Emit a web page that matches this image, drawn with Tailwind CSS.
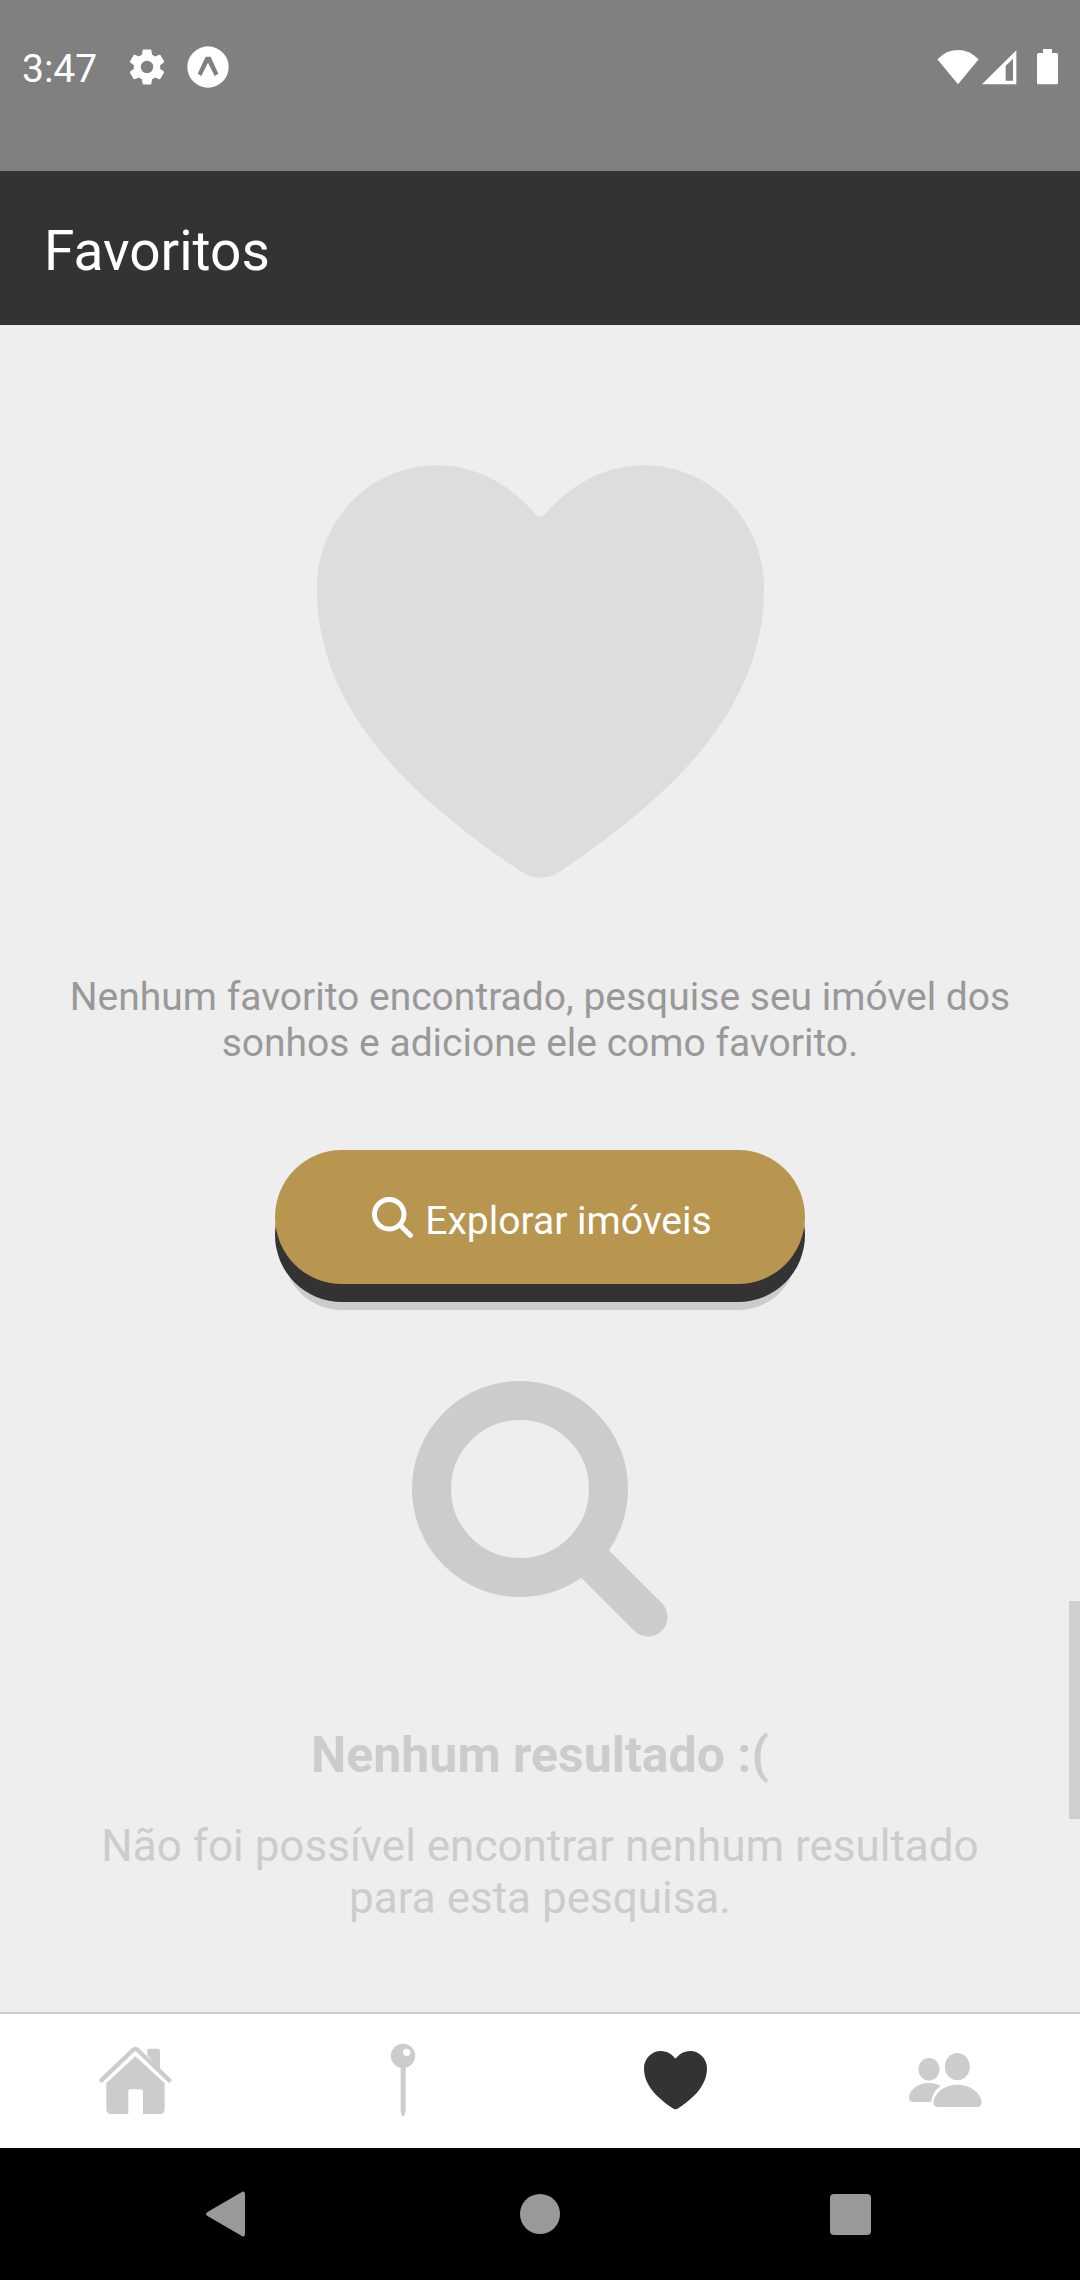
<!DOCTYPE html>
<html lang="pt-BR">
<head>
<meta charset="utf-8">
<meta name="viewport" content="width=device-width, initial-scale=1">
<title>Favoritos</title>
<script src="https://cdn.jsdelivr.net/npm/@tailwindcss/browser@4"></script>
</head>
<body class="flex min-h-screen flex-col bg-[#eeeeee] font-[Roboto,sans-serif]">
  <!-- System status bar -->
  <div class="flex h-[171px] items-start justify-between bg-[#808080] px-[22px] pt-[43px] text-white">
    <div class="flex h-12 items-center">
      <span class="pt-1 text-[39px] leading-[46px]">3:47</span>
      <svg class="ml-7 size-[44px]" viewBox="0 0 24 24" fill="currentColor" aria-hidden="true"><path d="M19.14 12.94c.04-.3.06-.61.06-.94 0-.32-.02-.64-.07-.94l2.03-1.58c.18-.14.23-.41.12-.61l-1.92-3.32c-.12-.22-.37-.29-.59-.22l-2.39.96c-.5-.38-1.03-.7-1.62-.94l-.36-2.54c-.04-.24-.24-.41-.48-.41h-3.84c-.24 0-.43.17-.47.41l-.36 2.54c-.59.24-1.13.57-1.62.94l-2.39-.96c-.22-.08-.47 0-.59.22L2.74 8.87c-.12.21-.08.47.12.61l2.03 1.58c-.05.3-.09.63-.09.94s.02.64.07.94l-2.03 1.58c-.18.14-.23.41-.12.61l1.92 3.32c.12.22.37.29.59.22l2.39-.96c.5.38 1.03.7 1.62.94l.36 2.54c.05.24.24.41.48.41h3.84c.24 0 .44-.17.47-.41l.36-2.54c.59-.24 1.13-.56 1.62-.94l2.39.96c.22.08.47 0 .59-.22l1.92-3.32c.12-.22.07-.47-.12-.61l-2.01-1.58zM12 15.4a3.4 3.4 0 1 1 0-6.8 3.4 3.4 0 0 1 0 6.8z"/></svg>
      <svg class="ml-[18px] size-[42px]" viewBox="0 0 126 126" aria-hidden="true"><circle cx="63" cy="63" r="62" fill="#fff"/><path d="M56 32h15l23 51-11 7-20-40-20 40-11-7z" fill="#808080"/></svg>
    </div>
    <div class="flex h-12 items-center">
      <svg class="h-9 w-[42px]" viewBox="0 0 126 108" fill="currentColor" aria-hidden="true"><path d="M1 31Q29 3 63 3t62 28L63 106z"/></svg>
      <svg class="ml-0.5 size-9" viewBox="0 0 108 108" fill="currentColor" aria-hidden="true"><path fill-rule="evenodd" d="M106 4v102H3zM96 29L74 51v44h22z"/></svg>
      <svg class="ml-5 h-9 w-[21px]" viewBox="0 0 63 108" fill="currentColor" aria-hidden="true"><path d="M18 0h27v12h13q5 0 5 5v84q0 5-5 5H5q-5 0-5-5V17q0-5 5-5h13z"/></svg>
    </div>
  </div>

  <header class="h-[154px] bg-[#333333] px-11 pt-12">
    <h1 class="text-[55px] leading-[64px] text-white">Favoritos</h1>
  </header>

  <main class="relative flex flex-1 flex-col items-center px-[66px] pt-[140px] pb-[88px] text-center">
    <svg class="h-[413px] w-[447px] text-[#dddddd]" viewBox="48 64 416 384" fill="currentColor" aria-hidden="true"><path d="M256 448a32 32 0 01-18-5.57c-78.59-53.35-112.62-89.93-131.39-112.8-40-48.75-59.15-98.8-58.61-153C48.63 114.52 98.46 64 159.08 64c44.08 0 74.61 24.83 92.39 45.51a6 6 0 009.06 0C278.31 88.81 308.84 64 352.92 64c60.62 0 110.45 50.52 111.08 112.64.54 54.21-18.63 104.26-58.61 153-18.77 22.87-52.8 59.45-131.39 112.8A32 32 0 01256 448z"/></svg>
    <p class="mt-24 text-[39px] leading-[46px] text-[#999999]">Nenhum favorito encontrado, pesquise seu imóvel dos sonhos e adicione ele como favorito.</p>
    <button type="button" class="mt-[84px] flex h-[134px] w-[530px] items-center justify-center gap-3 rounded-full bg-[#b89650] pl-1 text-[39px] leading-[46px] text-white shadow-[0_18px_0_#333333,0_34px_0_-8px_#cccccc]">
      <svg class="size-[41px]" viewBox="48 48 416 416" fill="currentColor" aria-hidden="true"><path d="M456.69 421.39L362.6 327.3a173.81 173.81 0 0034.84-104.58C397.44 126.38 319.06 48 222.72 48S48 126.38 48 222.72s78.38 174.72 174.72 174.72A173.81 173.81 0 00327.3 362.6l94.09 94.09a25 25 0 0035.3-35.3zM97.92 222.72a124.8 124.8 0 11124.8 124.8 124.95 124.95 0 01-124.8-124.8z"/></svg>
      <span class="pt-2">Explorar imóveis</span>
    </button>
    <svg class="mt-[97px] size-64 text-[#cccccc]" viewBox="0 0 256 256" fill="none" stroke="currentColor" stroke-width="39" stroke-linecap="round" aria-hidden="true"><circle cx="108" cy="108" r="88.500"/><path d="M172 172l64 64"/></svg>
    <h2 class="mt-[88px] text-[50px] leading-[60px] font-bold text-[#cccccc]">Nenhum resultado :(</h2>
    <p class="mt-[35px] text-[44px] leading-[52px] text-[#cccccc]">Não foi possível encontrar nenhum resultado para esta pesquisa.</p>
    <!-- Scroll indicator -->
    <div class="absolute right-0 bottom-[193px] h-[218px] w-[11px] bg-[#cfcfcf]"></div>
  </main>

  <nav class="grid h-[136px] grid-cols-4 border-t-2 border-[#cccccc] bg-white text-[#cccccc]" aria-label="Principal">
    <a href="#inicio" aria-label="Início" class="flex items-center justify-center">
      <svg class="size-20" viewBox="75 123 240 240" fill="currentColor" aria-hidden="true"><path d="M232 165V152q0-6 6-6h26q6 0 6 6v57z"/><path d="M94 241L189 150q7-6 14 0L298 241" fill="none" stroke="currentColor" stroke-width="13" stroke-linecap="round"/><path d="M196 169L284 250V328q0 14-14 14H219V274q0-6-6-6H181q-6 0-6 6V342H123q-14 0-14-14V250z"/></svg>
    </a>
    <a href="#mapa" aria-label="Mapa" class="flex items-center justify-center">
      <svg class="size-20" viewBox="885 123 240 240" fill="currentColor" aria-hidden="true"><path fill-rule="evenodd" d="M999 131a36 36 0 1 1 0 73 36 36 0 1 1 0-73zM1010 146a11 11 0 1 0 0 22 11 11 0 1 0 0-22z"/><path d="M992 200h15v135l-5 12q-3 3-6 0l-4-12z"/></svg>
    </a>
    <a href="#favoritos" aria-label="Favoritos" aria-current="page" class="flex items-center justify-center text-[#333333]">
      <svg class="size-20" viewBox="45 123 240 240" fill="currentColor" aria-hidden="true"><path transform="translate(50.2 124) scale(.4543)" d="M256 448a32 32 0 01-18-5.57c-78.59-53.35-112.62-89.93-131.39-112.8-40-48.75-59.15-98.8-58.61-153C48.63 114.52 98.46 64 159.08 64c44.08 0 74.61 24.83 92.39 45.51a6 6 0 009.06 0C278.31 88.81 308.84 64 352.92 64c60.62 0 110.45 50.52 111.08 112.64.54 54.21-18.63 104.26-58.61 153-18.77 22.87-52.8 59.45-131.39 112.8A32 32 0 01256 448z"/></svg>
    </a>
    <a href="#perfil" aria-label="Contatos" class="flex items-center justify-center">
      <svg class="size-20" viewBox="855 123 240 240" fill="currentColor" aria-hidden="true"><ellipse cx="927" cy="208" rx="31.500" ry="34"/><ellipse cx="1012" cy="200" rx="37.500" ry="41"/><path d="M880 306q-13 0-13-13C869 267 896 249 927 249q21 0 35 9c-17 11-25 25-28 48z"/><path d="M954 321q-14 0-14-14C944 275 977 254 1012 254s70 22 73 53q0 14-14 14z"/></svg>
    </a>
  </nav>

  <!-- System navigation buttons -->
  <div class="grid h-[132px] grid-cols-3 bg-black px-[75px] text-[#999999]">
    <button type="button" aria-label="Voltar" class="flex items-center justify-center pr-2"><svg class="h-[46px] w-10" viewBox="0 0 40 46" fill="currentColor" aria-hidden="true"><path d="M35 1.500q4-2.500 4 2v39q0 4.500-4 2L1.500 25q-3-2 0-4z"/></svg></button>
    <button type="button" aria-label="Tela inicial" class="flex items-center justify-center"><span class="size-10 rounded-full bg-[#999999]"></span></button>
    <button type="button" aria-label="Recentes" class="flex items-center justify-center"><span class="size-[41px] rounded-[4px] bg-[#999999]"></span></button>
  </div>
</body>
</html>
